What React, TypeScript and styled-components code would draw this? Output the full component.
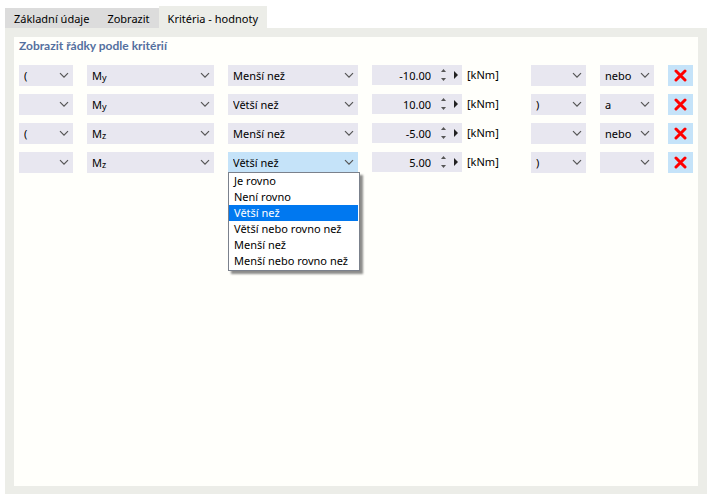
import React, { useState } from "react";
import styled, { createGlobalStyle } from "styled-components";

const GlobalStyle = createGlobalStyle`
  *, *::before, *::after { box-sizing: border-box; }
  body { margin: 0; background: #ffffff; }
  body, button, input, select {
    font-family: "Noto Sans", "Open Sans", sans-serif;
    font-size: 11px;
    line-height: 16px;
    color: #000000;
  }
  button, input, select { border: 0; margin: 0; padding: 0; border-radius: 0; outline: none; }
`;

const Page = styled.main`
  display: flex;
  flex-direction: column;
  min-height: 100vh;
  padding: 6px 6px 6px 5px;
`;

const TabBar = styled.div`
  display: flex;
  align-items: flex-end;
`;

const Tab = styled.button<{ $active: boolean }>`
  height: ${(p) => (p.$active ? 22 : 20)}px;
  padding: ${(p) => (p.$active ? 4 : 2)}px 9px 0;
  background: ${(p) => (p.$active ? "#ecede8" : "#dcdcdc")};
  white-space: nowrap;

  & + & {
    border-left: ${(p) => (p.$active ? "0" : "1px solid #d2d2d2")};
  }
`;

const Frame = styled.section`
  display: flex;
  flex: 1;
  padding: 9px 9px 8px;
  background: #ecede8;
`;

const Panel = styled.div`
  flex: 1;
  min-width: 0;
  padding: 0 5px;
  background: #fffffb;
`;

const Heading = styled.h2`
  margin: 0 0 10px;
  font-family: Lato, "Noto Sans", sans-serif;
  font-size: 12px;
  line-height: 18px;
  font-weight: 700;
  color: #54709f;
`;

const Rows = styled.div`
  display: grid;
  gap: 8px;
`;

const Row = styled.div`
  display: grid;
  grid-template-columns: 54fr 127fr 130fr 145px 55fr 54fr 25px;
  column-gap: 14px;
`;

const Field = styled.div`
  position: relative;
  min-width: 0;
`;

const Select = styled.select<{ $active?: boolean; $masked?: boolean }>`
  display: block;
  appearance: none;
  width: 100%;
  height: 21px;
  padding: 1px 18px 0 5px;
  background: ${(p) => (p.$active ? "#c5e3f9" : "#e8e7f0")};
  color: ${(p) => (p.$masked ? "transparent" : "#000000")};

  option { color: #000000; }
`;

const Chevron = styled.svg`
  position: absolute;
  right: 4px;
  top: 7px;
  width: 10px;
  height: 7px;
  pointer-events: none;
`;

const Symbol = styled.span`
  position: absolute;
  left: 5px;
  top: 3px;
  pointer-events: none;
`;

const Index = styled.sub`
  font-size: 9px;
  line-height: 0;
  vertical-align: -1px;
`;

const Menu = styled.ul`
  position: absolute;
  z-index: 1;
  top: 20px;
  left: 0;
  min-width: calc(100% + 2px);
  margin: 0;
  padding: 0 1px 1px 0;
  list-style: none;
  white-space: nowrap;
  background: #ffffff;
  border: 1px solid #7b818c;
  box-shadow: 3px 3px 2px rgba(0, 0, 0, 0.45);
`;

const MenuItem = styled.li<{ $selected: boolean }>`
  padding: 0 5px;
  line-height: 16px;
  background: ${(p) => (p.$selected ? "#0078f0" : "transparent")};
  color: ${(p) => (p.$selected ? "#ffffff" : "#000000")};
`;

const ValueGroup = styled.div`
  display: flex;
  align-items: flex-start;
  gap: 5px;
`;

const ValueBox = styled.div`
  display: flex;
  align-items: center;
  width: 90px;
  height: 20px;
  background: #e8e7f0;
`;

const ValueInput = styled.input`
  flex: 1;
  min-width: 0;
  height: 20px;
  background: transparent;
  text-align: right;
`;

const Spinner = styled.div`
  display: flex;
  flex-direction: column;
  margin: 0 2px 0 7px;
`;

const Step = styled.button`
  display: flex;
  align-items: center;
  justify-content: center;
  width: 10px;
  height: 9px;
  background: transparent;
`;

const More = styled.button`
  display: flex;
  align-items: center;
  justify-content: center;
  width: 12px;
  height: 20px;
  background: transparent;
`;

const Unit = styled.span`
  line-height: 20px;
`;

const RemoveButton = styled.button`
  display: flex;
  align-items: center;
  justify-content: center;
  height: 21px;
  background: #c5e3f9;
`;

const ChevronIcon = () => (
  <Chevron viewBox="0 0 10 7" aria-hidden="true">
    <path d="M1 1.2 5 5.2 9 1.2" fill="none" stroke="#555555" strokeWidth="1.2" />
  </Chevron>
);

const operators = [
  "Je rovno",
  "Není rovno",
  "Větší než",
  "Větší nebo rovno než",
  "Menší než",
  "Menší nebo rovno než",
];

type Criterion = {
  open: string;
  axis: string;
  operator: string;
  value: string;
  close: string;
  link: string;
};

const initial: Criterion[] = [
  { open: "(", axis: "y", operator: "Menší než", value: "-10.00", close: "", link: "nebo" },
  { open: "", axis: "y", operator: "Větší než", value: "10.00", close: ")", link: "a" },
  { open: "(", axis: "z", operator: "Menší než", value: "-5.00", close: "", link: "nebo" },
  { open: "", axis: "z", operator: "Větší než", value: "5.00", close: ")", link: "" },
];

const tabs = ["Základní údaje", "Zobrazit", "Kritéria - hodnoty"];

type DropDownProps = {
  label: string;
  value: string;
  options: string[];
  onChange: (value: string) => void;
};

const DropDown = ({ label, value, options, onChange }: DropDownProps) => (
  <Field>
    <Select aria-label={label} value={value} onChange={(e) => onChange(e.target.value)}>
      {options.map((o) => (
        <option key={o} value={o}>{o}</option>
      ))}
    </Select>
    <ChevronIcon />
  </Field>
);

export default function App() {
  const [rows, setRows] = useState(initial);
  const [activeTab, setActiveTab] = useState(2);
  const [openRow, setOpenRow] = useState(3);

  const update = (i: number, patch: Partial<Criterion>) =>
    setRows(rows.map((r, n) => (n === i ? { ...r, ...patch } : r)));
  const step = (i: number, by: number) =>
    update(i, { value: (Number(rows[i].value) + by).toFixed(2) });

  return (
    <>
      <GlobalStyle />
      <Page>
        <TabBar role="tablist">
          {tabs.map((t, i) => (
            <Tab
              key={t}
              role="tab"
              aria-selected={i === activeTab}
              $active={i === activeTab}
              onClick={() => setActiveTab(i)}
            >
              {t}
            </Tab>
          ))}
        </TabBar>
        <Frame>
          <Panel>
            <Heading>Zobrazit řádky podle kritérií</Heading>
            <Rows>
              {rows.map((r, i) => (
                <Row key={i}>
                  <DropDown label="Levá závorka" value={r.open} options={["", "("]} onChange={(open) => update(i, { open })} />
                  <Field>
                    <Select $masked aria-label="Veličina" value={r.axis} onChange={(e) => update(i, { axis: e.target.value })}>
                      <option value="y">My</option>
                      <option value="z">Mz</option>
                    </Select>
                    <Symbol aria-hidden="true">M<Index>{r.axis}</Index></Symbol>
                    <ChevronIcon />
                  </Field>
                  <Field>
                    <Select
                      $active={openRow === i}
                      aria-label="Podmínka"
                      value={r.operator}
                      onChange={(e) => update(i, { operator: e.target.value })}
                    >
                      {operators.map((o) => (
                        <option key={o}>{o}</option>
                      ))}
                    </Select>
                    <ChevronIcon />
                    {openRow === i && (
                      <Menu role="listbox" aria-label="Podmínka">
                        {operators.map((o) => (
                          <MenuItem
                            key={o}
                            role="option"
                            aria-selected={o === r.operator}
                            $selected={o === r.operator}
                            onClick={() => {
                              update(i, { operator: o });
                              setOpenRow(-1);
                            }}
                          >
                            {o}
                          </MenuItem>
                        ))}
                      </Menu>
                    )}
                  </Field>
                  <ValueGroup>
                    <ValueBox>
                      <ValueInput
                        aria-label="Hodnota"
                        inputMode="decimal"
                        value={r.value}
                        onChange={(e) => update(i, { value: e.target.value })}
                      />
                      <Spinner>
                        <Step aria-label="Zvýšit" onClick={() => step(i, 1)}>
                          <svg width="5" height="3" viewBox="0 0 5 3"><path d="M0 3 2.5 0 5 3Z" fill="#555555" /></svg>
                        </Step>
                        <Step aria-label="Snížit" onClick={() => step(i, -1)}>
                          <svg width="5" height="3" viewBox="0 0 5 3"><path d="M0 0 2.5 3 5 0Z" fill="#555555" /></svg>
                        </Step>
                      </Spinner>
                      <More aria-label="Další možnosti">
                        <svg width="4" height="8" viewBox="0 0 4 8"><path d="M0 0 4 4 0 8Z" fill="#222222" /></svg>
                      </More>
                    </ValueBox>
                    <Unit>[kNm]</Unit>
                  </ValueGroup>
                  <DropDown label="Pravá závorka" value={r.close} options={["", ")"]} onChange={(close) => update(i, { close })} />
                  <DropDown label="Spojka" value={r.link} options={["", "a", "nebo"]} onChange={(link) => update(i, { link })} />
                  <RemoveButton aria-label="Odstranit řádek" onClick={() => setRows(rows.filter((_, n) => n !== i))}>
                    <svg width="13" height="13" viewBox="0 0 13 13">
                      <path d="M2 2 11 11M11 2 2 11" fill="none" stroke="#ff0000" strokeWidth="3" strokeLinecap="round" />
                    </svg>
                  </RemoveButton>
                </Row>
              ))}
            </Rows>
          </Panel>
        </Frame>
      </Page>
    </>
  );
}
